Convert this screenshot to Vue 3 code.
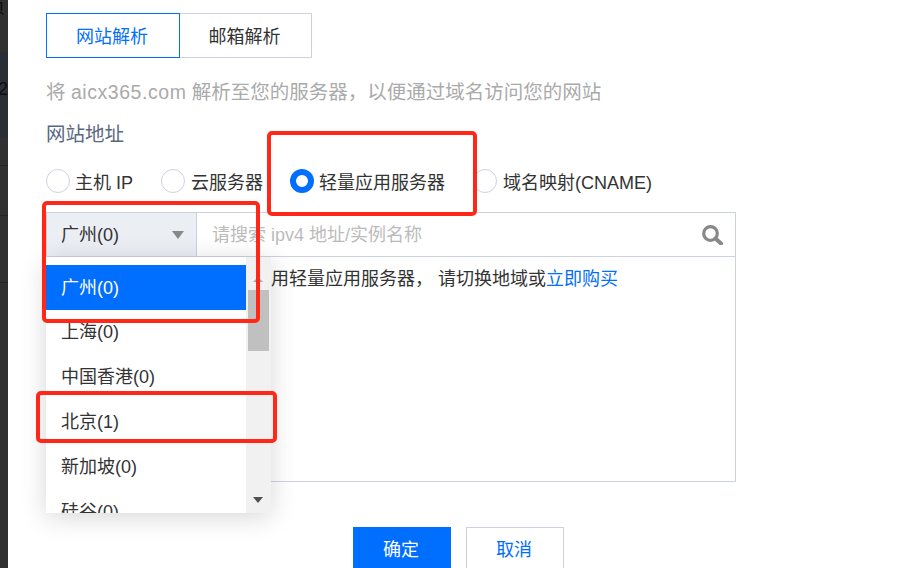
<script setup>
const regions = ['广州(0)', '上海(0)', '中国香港(0)', '北京(1)', '新加坡(0)', '硅谷(0)']
const radios = [
  { label: '主机 IP', cls: 'r1' },
  { label: '云服务器', cls: 'r2' },
  { label: '轻量应用服务器', cls: 'r3', on: true },
  { label: '域名映射(CNAME)', cls: 'r4' },
]
</script>

<template>
  <div class="page">
    <aside class="strip">
      <span class="strip-a">页</span>
      <span class="strip-b">20</span>
      <i class="band"></i>
      <i class="rule l1"></i>
      <i class="rule l2"></i>
      <i class="rule l3"></i>
    </aside>
    <main class="dialog">
      <div class="tabs">
        <button class="tab active">网站解析</button>
        <button class="tab">邮箱解析</button>
      </div>
      <p class="desc">将 <span class="domain">aicx365.com</span> 解析至您的服务器，以便通过域名访问您的网站</p>
      <div class="label">网站地址</div>
      <div class="radios">
        <label v-for="r in radios" :key="r.label" class="radio" :class="r.cls">
          <i class="dot" :class="{ on: r.on }"></i>
          <span>{{ r.label }}</span>
        </label>
      </div>
      <div class="panel">
        <div class="panel-head">
          <div class="select">
            <span class="select-text">广州(0)</span>
            <i class="caret"></i>
          </div>
          <div class="search">
            <span class="ph">请搜索 ipv4 地址/实例名称</span>
            <svg class="glass" width="21" height="21" viewBox="0 0 21 21">
              <circle cx="8.5" cy="9.5" r="6.8" fill="none" stroke="#888" stroke-width="3.2" />
              <path d="M13.5 14.5 L19 19.5" stroke="#888" stroke-width="4" stroke-linecap="round" />
            </svg>
          </div>
        </div>
        <div class="panel-body">
          <span>用轻量应用服务器， 请切换地域或<a class="link">立即购买</a></span>
        </div>
      </div>
      <div class="actions">
        <button class="btn primary">确定</button>
        <button class="btn">取消</button>
      </div>

      <div class="dropdown">
        <ul class="options">
          <li v-for="(o, i) in regions" :key="o" :class="{ sel: i === 0 }">{{ o }}</li>
        </ul>
        <div class="scrollbar">
          <i class="arrow up"></i>
          <i class="thumb"></i>
          <i class="arrow down"></i>
        </div>
      </div>
    </main>

    <i class="mark m1"></i>
    <i class="mark m2"></i>
    <i class="mark m3"></i>
  </div>
</template>

<style>
html, body { margin: 0; background: #fff; overflow: hidden; }
</style>

<style scoped>
.page {
  position: relative;
  display: flex;
  width: 909px;
  height: 568px;
  overflow: hidden;
  font-family: "Liberation Sans", "Noto Sans CJK SC", sans-serif;
  color: #333;
}
.strip {
  position: relative;
  flex: 0 0 8px;
  overflow: hidden;
  background: #303030;
  color: #0d0d0d;
  font-size: 18px;
}
.strip-a { position: absolute; z-index: 1; left: -13px; top: -8px; }
.strip-b { position: absolute; z-index: 1; left: -2px; top: 79px; }
.band { position: absolute; left: 0; right: 0; top: 52px; height: 85px; background: #2a2e37; }
.rule { position: absolute; left: 0; right: 0; height: 1px; background: #252525; }
.l1 { top: 165px; }
.l2 { top: 215px; }
.l3 { top: 282px; }
.dialog {
  position: relative;
  flex: 1;
  padding: 13px 0 0 38px;
  box-sizing: border-box;
}
.tabs { display: flex; height: 45px; }
.tab {
  width: 132px;
  height: 45px;
  padding: 0 2px 2px 0;
  border: 1px solid #ccd2de;
  border-left: 0;
  background: #fff;
  color: #333;
  font: inherit;
  font-size: 18px;
}
.tab.active {
  width: 134px;
  border: 1px solid #006eff;
  color: #006eff;
}
.desc {
  margin: 21px 0 0;
  height: 26px;
  line-height: 26px;
  font-size: 19.5px;
  color: #aaa;
}
.domain { letter-spacing: 0.55px; }
.label {
  margin-top: 16px;
  height: 26px;
  line-height: 26px;
  font-size: 19.5px;
  color: #5a6880;
}
.radios {
  position: relative;
  height: 26px;
  margin-top: 21px;
}
.radio {
  position: absolute;
  top: 0;
  display: flex;
  align-items: center;
  gap: 6px;
  height: 26px;
  font-size: 18px;
  white-space: nowrap;
}
.r1 { left: 0; gap: 5px; }
.r2 { left: 115px; }
.r3 { left: 244px; gap: 5px; }
.r4 { left: 427px; }
.dot {
  box-sizing: border-box;
  width: 24px;
  height: 24px;
  border: 1px solid #ccd2de;
  border-radius: 50%;
  background: #fff;
}
.dot.on { border: 6px solid #006eff; }
.panel {
  box-sizing: border-box;
  width: 690px;
  height: 270px;
  margin-top: 18px;
  border: 1px solid #ccd2de;
}
.panel-head {
  display: flex;
  height: 43px;
  border-bottom: 1px solid #ccd2de;
}
.select {
  box-sizing: border-box;
  display: flex;
  align-items: center;
  justify-content: space-between;
  width: 150px;
  padding: 0 12px 0 14px;
  background: #ebeef3;
  border-right: 1px solid #ccd2de;
  font-size: 18px;
}
.select-text { margin-bottom: 3px; }
.caret {
  width: 0;
  height: 0;
  border-left: 6px solid transparent;
  border-right: 6px solid transparent;
  border-top: 8px solid #888;
}
.search {
  flex: 1;
  display: flex;
  align-items: center;
  justify-content: space-between;
  padding: 0 12px 0 15px;
}
.ph { margin-bottom: 3px; font-size: 18px; color: #bbb; }
.glass { display: block; }
.panel-body {
  padding: 9px 0 0 224px;
  font-size: 18px;
  line-height: 26px;
}
.link { color: #006eff; }
.actions {
  display: flex;
  gap: 15px;
  margin: 45px 0 0 307px;
}
.btn {
  width: 98px;
  height: 45px;
  padding: 0 2px 3px 0;
  border: 1px solid #ccd2de;
  background: #fff;
  color: #006eff;
  font: inherit;
  font-size: 18px;
}
.btn.primary {
  border-color: #006eff;
  background: #006eff;
  color: #fff;
}
.dropdown {
  position: absolute;
  left: 38px;
  top: 257px;
  display: flex;
  width: 225px;
  height: 256px;
  overflow: hidden;
  background: #fff;
  box-shadow: 0 4px 24px rgba(0, 0, 0, 0.16);
}
.options {
  flex: 0 0 200px;
  margin: 8px 0 0;
  padding: 0;
  list-style: none;
  font-size: 18px;
  overflow: hidden;
}
.options li {
  height: 45px;
  line-height: 45px;
  padding-left: 15px;
  white-space: nowrap;
}
.options li.sel { background: #006eff; color: #fff; line-height: 46px; }
.scrollbar {
  position: relative;
  flex: 1;
  background: #f1f1f1;
}
.thumb {
  position: absolute;
  left: 2px;
  top: 33px;
  width: 21px;
  height: 61px;
  background: #c0c0c0;
}
.arrow {
  position: absolute;
  left: 7px;
  width: 0;
  height: 0;
  border-left: 5.5px solid transparent;
  border-right: 5.5px solid transparent;
}
.arrow.up { top: 20px; border-bottom: 5px solid #a8a8a8; }
.arrow.down { bottom: 10px; border-top: 6px solid #505050; }
.mark {
  position: absolute;
  box-sizing: border-box;
  border: 4px solid #ff2718;
  border-radius: 5px;
  pointer-events: none;
}
.m1 { left: 267px; top: 131px; width: 210px; height: 85px; }
.m2 { left: 42px; top: 201px; width: 218px; height: 122px; }
.m3 { left: 36px; top: 391px; width: 241px; height: 52px; }
</style>
